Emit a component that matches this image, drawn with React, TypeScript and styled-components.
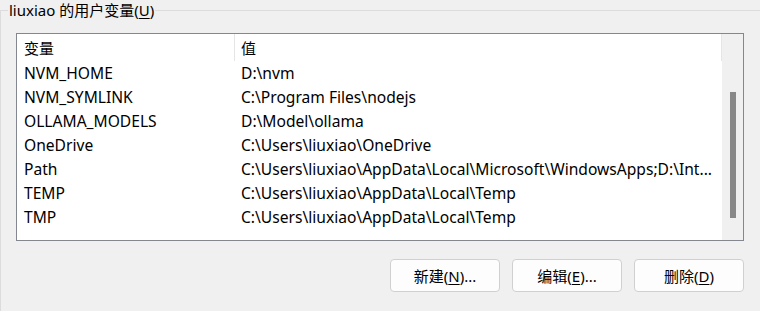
import React from "react";
import styled, { createGlobalStyle } from "styled-components";

const Global = createGlobalStyle`
  html, body { margin: 0; padding: 0; background: #f0f0f0; }
  body {
    font-family: "Noto Sans", "Noto Sans CJK SC", sans-serif;
    font-size: 15px;
    color: #000;
  }
`;

const Group = styled.fieldset`
  margin: 0;
  padding: 13px 0 0 15px;
  min-height: 100vh;
  border: none;
  border-top: 1px solid #dcdcdc;
  border-left: 1px solid #dcdcdc;
  min-width: 0;
  box-sizing: border-box;
`;

const Title = styled.legend`
  margin-left: -8px;
  padding: 0 1px;
  line-height: 20px;
  font-size: 15px;
`;

const Key = styled.span`
  text-decoration: underline;
  text-underline-offset: 2px;
`;

const ListBox = styled.div`
  width: 728px;
  height: 208px;
  box-sizing: border-box;
  border: 1px solid #828790;
  background: #fff;
  display: flex;
  font-size: 15.6px;
`;

const Table = styled.div`
  flex: 1;
  min-width: 0;
  display: flex;
  flex-direction: column;
`;

const HeaderRow = styled.div`
  display: grid;
  grid-template-columns: 218px 486px 1px;
  height: 27px;
  align-items: center;
  font-size: 15px;
`;

const HeaderCell = styled.div<{ $first?: boolean }>`
  height: 100%;
  display: flex;
  align-items: center;
  padding-left: ${(p) => (p.$first ? "7px" : "6px")};
  border-right: ${(p) => (p.$first ? "1px solid #e5e5e5" : "none")};
  box-sizing: border-box;
`;

const HeaderEdge = styled.div`
  height: 100%;
  background: #e5e5e5;
`;

const Row = styled.div`
  display: grid;
  grid-template-columns: 218px 1fr;
  height: 24px;
  align-items: center;
`;

const Cell = styled.div<{ $first?: boolean }>`
  padding-left: ${(p) => (p.$first ? "7px" : "6px")};
  white-space: nowrap;
  overflow: hidden;
`;

const ScrollTrack = styled.div`
  width: 21px;
  background: #f0f0f0;
  position: relative;
  flex-shrink: 0;
`;

const Thumb = styled.div`
  position: absolute;
  left: 8px;
  top: 58px;
  width: 6px;
  height: 126px;
  background: #888;
`;

const Buttons = styled.div`
  display: flex;
  justify-content: flex-end;
  gap: 12px;
  width: 728px;
  margin-top: 18px;
`;

const Button = styled.button`
  width: 110px;
  height: 33px;
  border: 1px solid #d0d0d0;
  border-radius: 4px;
  background: #fdfdfd;
  font-family: "Noto Sans", "Noto Sans CJK SC", sans-serif;
  font-size: 15px;
  color: #000;
  padding: 0;
`;

const rows: [string, string][] = [
  ["NVM_HOME", "D:\\nvm"],
  ["NVM_SYMLINK", "C:\\Program Files\\nodejs"],
  ["OLLAMA_MODELS", "D:\\Model\\ollama"],
  ["OneDrive", "C:\\Users\\liuxiao\\OneDrive"],
  ["Path", "C:\\Users\\liuxiao\\AppData\\Local\\Microsoft\\WindowsApps;D:\\Int..."],
  ["TEMP", "C:\\Users\\liuxiao\\AppData\\Local\\Temp"],
  ["TMP", "C:\\Users\\liuxiao\\AppData\\Local\\Temp"],
];

export default function App() {
  return (
    <>
      <Global />
      <Group>
        <Title>
          liuxiao 的用户变量(<Key>U</Key>)
        </Title>
        <ListBox>
          <Table>
            <HeaderRow>
              <HeaderCell $first>变量</HeaderCell>
              <HeaderCell>值</HeaderCell>
              <HeaderEdge />
            </HeaderRow>
            {rows.map(([k, v]) => (
              <Row key={k}>
                <Cell $first>{k}</Cell>
                <Cell>{v}</Cell>
              </Row>
            ))}
          </Table>
          <ScrollTrack>
            <Thumb />
          </ScrollTrack>
        </ListBox>
        <Buttons>
          <Button>
            新建(<Key>N</Key>)...
          </Button>
          <Button>
            编辑(<Key>E</Key>)...
          </Button>
          <Button>
            删除(<Key>D</Key>)
          </Button>
        </Buttons>
      </Group>
    </>
  );
}
